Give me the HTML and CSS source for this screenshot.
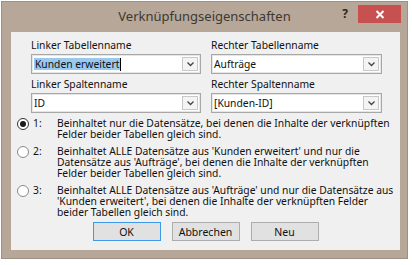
FILE: index.html
```html
<!DOCTYPE html>
<html lang="de">
<head>
    <meta charset="UTF-8">
    <title>Verknüpfungseigenschaften</title>
    <link rel="stylesheet" href="styles.css">
</head>
<body>
    <div class="window">
        <div class="titlebar">
            <div></div>
            <div class="title">Verknüpfungseigenschaften</div>
            <div class="controls">
                <span class="help">?</span>
                <span class="close">
                    <svg width="10" height="9" viewBox="0 0 10 9">
                        <path d="M1.5 1 L8.5 8 M8.5 1 L1.5 8" stroke="#fff" stroke-width="2"/>
                    </svg>
                </span>
            </div>
        </div>

        <div class="content">
            <div class="fields">
                <div class="field">
                    <label>Linker Tabellenname</label>
                    <div class="combo">
                        <span class="value"><span class="selected">Kunden erweitert</span><span class="caret"></span></span>
                        <span class="drop"><svg width="7" height="5" viewBox="0 0 7 5"><path d="M0.5 0.5 L3.5 3.5 L6.5 0.5" fill="none" stroke="#444" stroke-width="1.3"/></svg></span>
                    </div>
                </div>
                <div class="field">
                    <label>Rechter Tabellenname</label>
                    <div class="combo">
                        <span class="value">Aufträge</span>
                        <span class="drop"><svg width="7" height="5" viewBox="0 0 7 5"><path d="M0.5 0.5 L3.5 3.5 L6.5 0.5" fill="none" stroke="#444" stroke-width="1.3"/></svg></span>
                    </div>
                </div>
                <div class="field">
                    <label>Linker Spaltenname</label>
                    <div class="combo">
                        <span class="value">ID</span>
                        <span class="drop"><svg width="7" height="5" viewBox="0 0 7 5"><path d="M0.5 0.5 L3.5 3.5 L6.5 0.5" fill="none" stroke="#444" stroke-width="1.3"/></svg></span>
                    </div>
                </div>
                <div class="field">
                    <label>Rechter Spaltenname</label>
                    <div class="combo">
                        <span class="value">[Kunden-ID]</span>
                        <span class="drop"><svg width="7" height="5" viewBox="0 0 7 5"><path d="M0.5 0.5 L3.5 3.5 L6.5 0.5" fill="none" stroke="#444" stroke-width="1.3"/></svg></span>
                    </div>
                </div>
            </div>

            <div class="options">
                <div class="option">
                    <span class="radio checked"></span>
                    <span class="num">1:</span>
                    <p>Beinhaltet nur die Datensätze, bei denen die Inhalte der verknüpften<br>Felder beider Tabellen gleich sind.</p>
                </div>
                <div class="option">
                    <span class="radio"></span>
                    <span class="num">2:</span>
                    <p>Beinhaltet ALLE Datensätze aus 'Kunden erweitert' und nur die<br>Datensätze aus 'Aufträge', bei denen die Inhalte der verknüpften<br>Felder beider Tabellen gleich sind.</p>
                </div>
                <div class="option">
                    <span class="radio"></span>
                    <span class="num">3:</span>
                    <p>Beinhaltet ALLE Datensätze aus 'Aufträge' und nur die Datensätze aus<br>'Kunden erweitert', bei denen die Inhalte der verknüpften Felder<br>beider Tabellen gleich sind.</p>
                </div>
            </div>

            <div class="buttons">
                <button class="btn default">OK</button>
                <button class="btn">Abbrechen</button>
                <button class="btn">Neu</button>
            </div>
        </div>
    </div>
</body>
</html>
```

FILE: styles.css
```css
body {
    margin: 0;
    background: #fff;
    font-family: 'Noto Sans', sans-serif;
    color: #111;
}

.window {
    margin: 1px;
    width: 407px;
    height: 258px;
    box-sizing: border-box;
    border: 1px solid #9d9186;
    background: #b6a799;
    display: flex;
    flex-direction: column;
}

.titlebar {
    height: 30px;
    display: grid;
    grid-template-columns: 1fr auto 1fr;
    align-items: start;
}

.title {
    font-size: 13px;
    color: #3d3832;
    line-height: 28px;
}

.controls {
    display: flex;
    justify-content: flex-end;
    align-items: center;
    padding-top: 3px;
    padding-right: 6px;
}

.help {
    font-size: 12px;
    font-weight: bold;
    color: #2a2622;
    margin-right: 10px;
    line-height: 18px;
}

.close {
    width: 43px;
    height: 18px;
    background: #c75050;
    display: flex;
    justify-content: center;
    align-items: center;
}

.content {
    flex: 1;
    margin: 0 7px 8px 9px;
    background: #f0f0f0;
    box-sizing: border-box;
    padding-top: 6px;
    font-size: 10.3px;
}

.fields {
    display: grid;
    grid-template-columns: 170px 171px;
    column-gap: 10px;
    row-gap: 3px;
    margin-left: 20px;
}

.field label {
    display: block;
    height: 14px;
    line-height: 14px;
    margin-bottom: 2px;
}

.combo {
    height: 20px;
    box-sizing: border-box;
    border: 1px solid #a7a7a7;
    background: #fff;
    box-shadow: inset 0 0 0 1px #e6e6e6;
    display: flex;
    align-items: center;
    padding: 0 2px 0 2px;
}

.value {
    flex: 1;
    line-height: 12px;
    display: flex;
    align-items: center;
}

.selected {
    background: #99c9ef;
    padding: 0 1px;
}

.caret {
    width: 1px;
    height: 13px;
    background: #000;
}

.drop {
    width: 16px;
    height: 14px;
    box-sizing: border-box;
    border: 1px solid #c8c8c8;
    background: #f4f4f4;
    display: flex;
    justify-content: center;
    align-items: center;
}

.options {
    margin-top: 5px;
    padding-left: 6px;
    display: flex;
    flex-direction: column;
    gap: 6px;
}

.option {
    display: grid;
    grid-template-columns: 12px 20px 1fr;
    column-gap: 4px;
    align-items: start;
}

.option p {
    margin: 0;
    line-height: 11px;
}

.num {
    line-height: 11px;
}

.radio {
    width: 12px;
    height: 12px;
    box-sizing: border-box;
    border: 1px solid #8a8a8a;
    border-radius: 50%;
    background: #fff;
    display: flex;
    justify-content: center;
    align-items: center;
}

.radio.checked {
    border-color: #333;
}

.radio.checked::after {
    content: '';
    width: 6px;
    height: 6px;
    border-radius: 50%;
    background: #1a1a1a;
}

.buttons {
    display: flex;
    justify-content: center;
    gap: 11px;
    margin-top: 4px;
}

.btn {
    width: 68px;
    height: 19px;
    font-family: 'Noto Sans', sans-serif;
    font-size: 10.5px;
    color: #111;
    background: #e1e1e1;
    border: 1px solid #adadad;
    padding: 0;
}

.btn.default {
    border-color: #3c9ae8;
}
```
